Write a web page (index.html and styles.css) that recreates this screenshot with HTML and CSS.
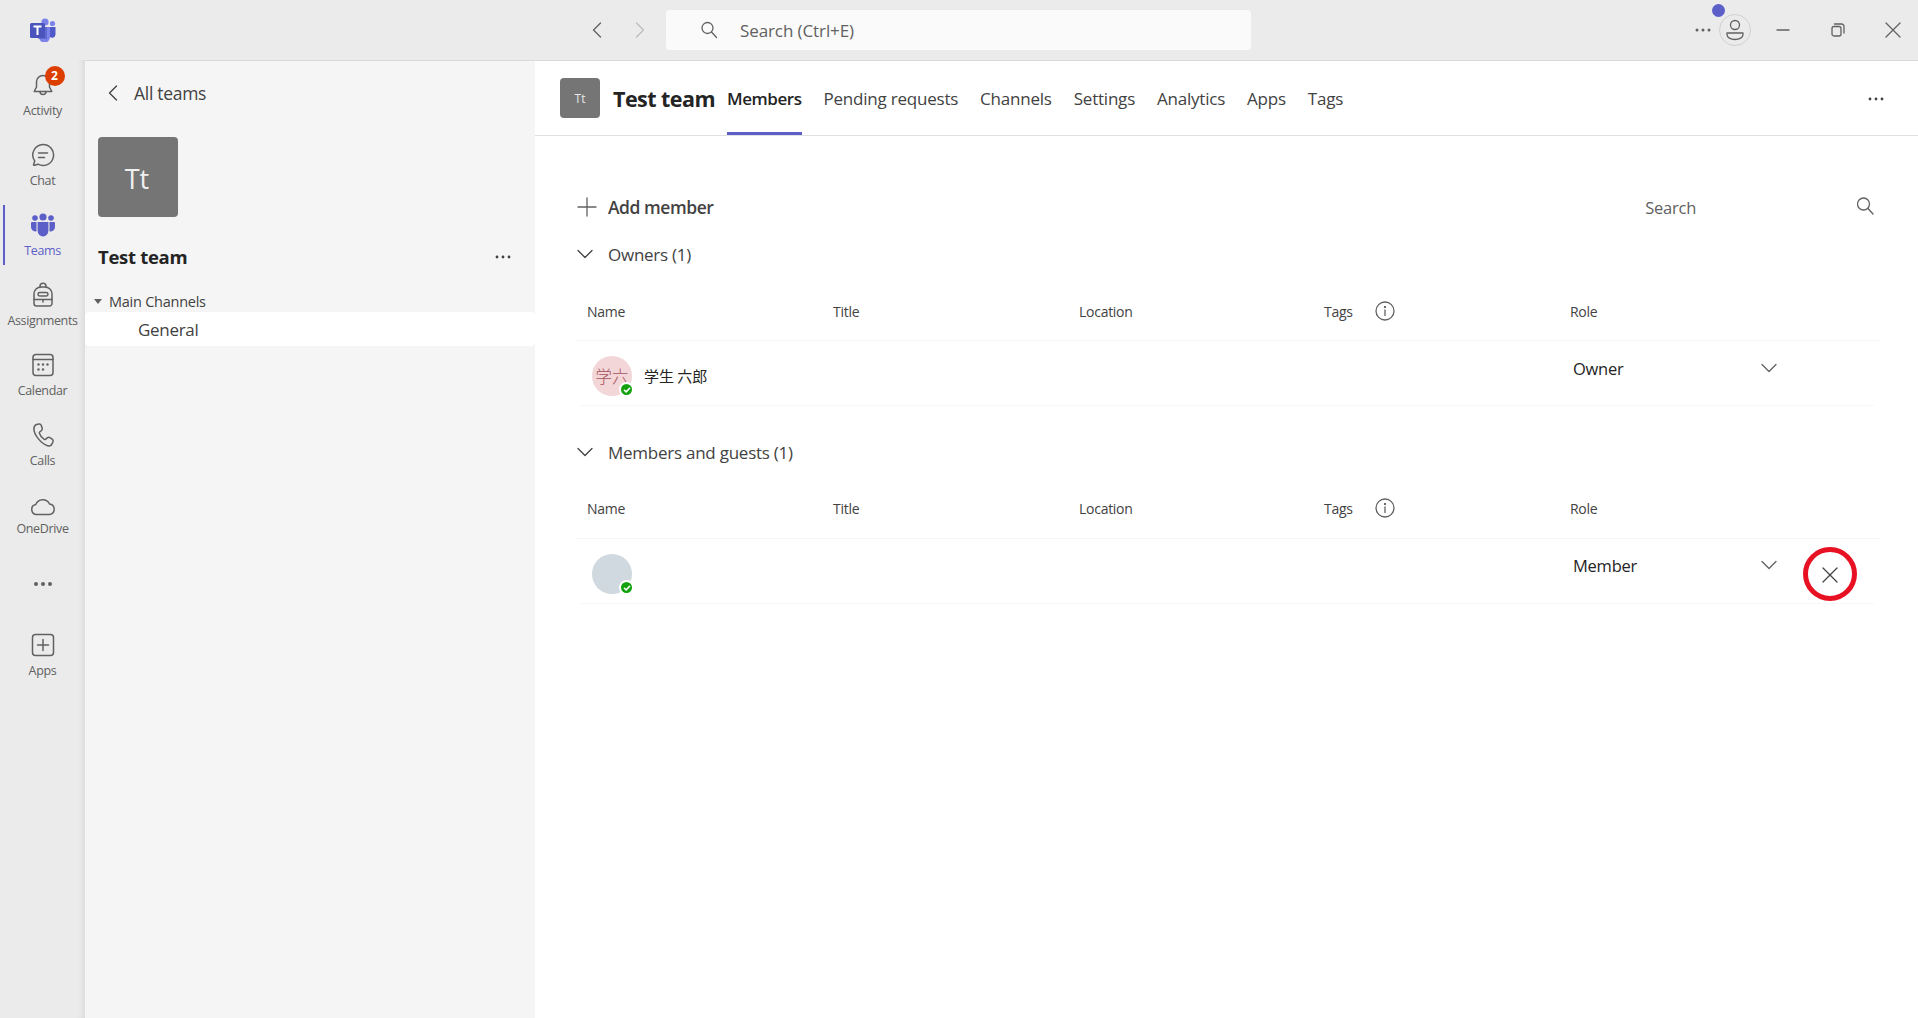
FILE: index.html
```html
<!DOCTYPE html>
<html lang="en">
<head>
<meta charset="utf-8">
<title>Test team - Members</title>
<link rel="stylesheet" href="styles.css">
</head>
<body>
<header class="topbar">
  <div class="logo-cell">
    <svg class="logo" viewBox="0 0 26 24" width="26" height="24">
      <circle cx="22.5" cy="5.5" r="2.6" fill="#7b83eb"/>
      <circle cx="15" cy="4" r="3.6" fill="#7b83eb"/>
      <path d="M19 9h6.5v7.5a3.5 3.5 0 0 1-6.500 1.500z" fill="#5059c9"/>
      <path d="M9 9h11v10a5.500 5.500 0 0 1-11 0z" fill="#7b83eb"/>
      <path d="M8 9h9v12H8z" fill="#4b53bc" opacity=".55"/>
      <rect x="0" y="5" width="15" height="15" rx="1.500" fill="#4b53bc"/>
      <path d="M3.500 8.500h8M7.500 8.500v8.500" stroke="#fff" stroke-width="2" fill="none"/>
    </svg>
  </div>
  <div class="history">
    <svg class="ico" viewBox="0 0 20 20" width="20" height="20"><path d="M12.500 3 5.500 10l7 7" class="ln"/></svg>
    <svg class="ico fwd" viewBox="0 0 20 20" width="20" height="20"><path d="M7.500 3l7 7-7 7" class="ln faint"/></svg>
  </div>
  <div class="searchbox">
    <svg class="ico" viewBox="0 0 20 20" width="20" height="20"><circle cx="8.500" cy="8" r="5.500" class="ln"/><path d="M12.500 12l5 5.500" class="ln"/></svg>
    <span class="search-text">Search (Ctrl+E)</span>
  </div>
  <div class="window-tools">
    <svg class="dots-ico" viewBox="0 0 16 4" width="16" height="4"><circle cx="2" cy="2" r="1.500"/><circle cx="8" cy="2" r="1.500"/><circle cx="14" cy="2" r="1.500"/></svg>
    <div class="profile">
      <svg viewBox="0 0 24 24" width="24" height="24"><circle cx="12" cy="7" r="4.500" class="ln"/><path d="M4 15h16v1.500c0 3-3.500 5-8 5s-8-2-8-5z" class="ln"/></svg>
      <span class="profile-dot"></span>
    </div>
    <svg class="win-min" viewBox="0 0 14 14" width="14" height="14"><path d="M1 7h12" class="ln"/></svg>
    <svg class="win-max" viewBox="0 0 14 14" width="14" height="14"><rect x="1" y="3.500" width="9" height="9.500" rx="2" class="ln"/><path d="M3.500 1h7a2.500 2.500 0 0 1 2.500 2.500V10" class="ln"/></svg>
    <svg class="win-close" viewBox="0 0 16 16" width="16" height="16"><path d="M1 1l14 14M15 1 1 15" class="ln"/></svg>
  </div>
</header>

<div class="app">
  <nav class="rail">
    <a class="rail-item">
      <span class="rail-icon">
        <svg viewBox="0 0 24 24" width="24" height="24"><path d="M12 2.500c-4 0-6.500 3-6.500 6.500v5L3.200 18.500h17.600L18.500 14V9c0-3.500-2.500-6.500-6.500-6.500z" class="ln"/><path d="M9 18.500c0 4 6 4 6 0" class="ln"/></svg>
        <span class="badge">2</span>
      </span>
      <span class="rail-label">Activity</span>
    </a>
    <a class="rail-item">
      <span class="rail-icon"><svg viewBox="0 0 24 24" width="24" height="24"><path d="M12 1.500a10.500 10.500 0 1 1-5 19.700l-3.500 1.100c-.6.200-1.100-.3-.9-.9L3.700 18A10.500 10.500 0 0 1 12 1.500z" class="ln"/><path d="M7.500 10h9M7.500 14.500h6" class="ln"/></svg></span>
      <span class="rail-label">Chat</span>
    </a>
    <a class="rail-item active">
      <span class="rail-icon"><svg viewBox="0 0 24 24" width="26" height="24"><circle cx="12" cy="4" r="3.600"/><circle cx="4" cy="5" r="2.800"/><circle cx="20" cy="5" r="2.800"/><path d="M6.600 9h10.800v9a5.400 5.400 0 0 1-10.800 0z"/><path d="M5.500 9H1.200C.5 9 0 9.500 0 10.200v3.800a4.500 4.500 0 0 0 5.500 4.300zM18.500 9h4.300c.7 0 1.200.5 1.200 1.200v3.800a4.500 4.500 0 0 1-5.500 4.300z"/></svg></span>
      <span class="rail-label">Teams</span>
    </a>
    <a class="rail-item">
      <span class="rail-icon"><svg viewBox="0 0 24 24" width="24" height="26"><path d="M9 4.500V3.200A3 3 0 0 1 15 3.200v1.300" class="ln"/><path d="M3 11a7 7 0 0 1 7-7h4a7 7 0 0 1 7 7v9.500a2.500 2.500 0 0 1-2.500 2.500h-13A2.500 2.500 0 0 1 3 20.500z" class="ln"/><rect x="7" y="9.500" width="10" height="3.500" rx="1.700" class="ln"/><path d="M3 16.500h18M12 16.500v2.500" class="ln"/></svg></span>
      <span class="rail-label">Assignments</span>
    </a>
    <a class="rail-item">
      <span class="rail-icon"><svg viewBox="0 0 24 24" width="24" height="24"><rect x="2" y="1.500" width="20" height="21" rx="3" class="ln"/><path d="M2 6.500h20" class="ln"/><g class="fill-dots"><circle cx="7.500" cy="11.500" r="1.200"/><circle cx="12" cy="11.500" r="1.200"/><circle cx="16.500" cy="11.500" r="1.200"/><circle cx="7.500" cy="16.500" r="1.200"/><circle cx="12" cy="16.500" r="1.200"/></g></svg></span>
      <span class="rail-label">Calendar</span>
    </a>
    <a class="rail-item">
      <span class="rail-icon"><svg viewBox="0 0 24 24" width="24" height="26"><path d="M5.500 1.500 8 1c1-.2 1.800.3 2.200 1.200l1 3c.3.900 0 1.700-.7 2.300L8.700 9c-.4.400-.5.800-.3 1.300.9 2.600 2.500 4.800 4.800 6.100.4.200.8.200 1.200-.1l1.900-1.500c.8-.6 1.700-.7 2.500-.2l2.400 1.600c.9.600 1.200 1.500.8 2.500l-1 2.200c-.6 1.500-2 2.500-3.700 2.100C9.500 20.500 3 11.500 2.900 6c0-2.200 1-3.900 2.600-4.500z" class="ln"/></svg></span>
      <span class="rail-label">Calls</span>
    </a>
    <a class="rail-item onedrive">
      <span class="rail-icon"><svg viewBox="0 0 26 18" width="26" height="18"><path d="M6.500 16.500a5 5 0 0 1-.7-9.900A7.500 7.500 0 0 1 19.500 6a5.300 5.300 0 0 1 .2 10.500z" class="ln"/></svg></span>
      <span class="rail-label">OneDrive</span>
    </a>
    <a class="rail-item more">
      <svg class="dots-ico" viewBox="0 0 20 6" width="20" height="6"><circle cx="3" cy="3" r="2"/><circle cx="10" cy="3" r="2"/><circle cx="17" cy="3" r="2"/></svg>
    </a>
    <a class="rail-item">
      <span class="rail-icon"><svg viewBox="0 0 24 24" width="24" height="24"><rect x="1.500" y="1.500" width="21" height="21" rx="3" class="ln"/><path d="M12 6.500v11M6.500 12h11" class="ln"/></svg></span>
      <span class="rail-label">Apps</span>
    </a>
  </nav>

  <aside class="panel">
    <div class="back-row">
      <svg viewBox="0 0 12 18" width="12" height="18"><path d="M9.500 2 2.500 9l7 7" class="ln dark"/></svg>
      <span class="back-text">All teams</span>
    </div>
    <div class="tile-large">Tt</div>
    <div class="panel-title-row">
      <span class="panel-title">Test team</span>
      <svg class="dots-ico darkdots" viewBox="0 0 16 4" width="16" height="4"><circle cx="2" cy="2" r="1.400"/><circle cx="8" cy="2" r="1.400"/><circle cx="14" cy="2" r="1.400"/></svg>
    </div>
    <div class="channel-group"><span class="caret"></span><span>Main Channels</span></div>
    <div class="channel">General</div>
  </aside>

  <main class="main">
    <div class="tabs-bar">
      <div class="tile-small">Tt</div>
      <h1 class="team-name">Test team</h1>
      <div class="tabs">
        <a class="tab current">Members</a>
        <a class="tab">Pending requests</a>
        <a class="tab">Channels</a>
        <a class="tab">Settings</a>
        <a class="tab">Analytics</a>
        <a class="tab">Apps</a>
        <a class="tab">Tags</a>
      </div>
      <svg class="dots-ico darkdots tabs-more" viewBox="0 0 16 4" width="16" height="4"><circle cx="2" cy="2" r="1.400"/><circle cx="8" cy="2" r="1.400"/><circle cx="14" cy="2" r="1.400"/></svg>
    </div>

    <div class="content">
      <div class="toolbar">
        <div class="add-member">
          <svg viewBox="0 0 20 20" width="20" height="20"><path d="M10 1v18M1 10h18" class="ln"/></svg>
          <span>Add member</span>
        </div>
        <div class="member-search">
          <span>Search</span>
          <svg viewBox="0 0 20 20" width="20" height="20"><circle cx="8.500" cy="8" r="6" class="ln"/><path d="M13 12.500l5 5.500" class="ln"/></svg>
        </div>
      </div>

      <section class="group">
        <div class="group-head">
          <svg viewBox="0 0 16 10" width="16" height="10"><path d="M1 1.500l7 7 7-7" class="ln dark"/></svg>
          <span>Owners (1)</span>
        </div>
        <div class="cols">
          <span>Name</span><span>Title</span><span>Location</span>
          <span class="tags-col">Tags <svg viewBox="0 0 20 20" width="20" height="20"><circle cx="10" cy="10" r="9" class="ln"/><path d="M10 9v5.500" class="ln"/><circle cx="10" cy="6" r="1.100" class="solid"/></svg></span>
          <span>Role</span>
        </div>
        <div class="member-row">
          <div class="person">
            <div class="avatar pink">学六<span class="presence"><svg viewBox="0 0 10 10" width="8" height="8"><path d="M1.800 5.300 4 7.300 8.200 2.800" class="tick"/></svg></span></div>
            <span class="person-name">学生 六郎</span>
          </div>
          <div class="role"><span>Owner</span><svg viewBox="0 0 16 10" width="16" height="10"><path d="M1 1.500l7 7 7-7" class="ln"/></svg></div>
        </div>
      </section>

      <section class="group second">
        <div class="group-head">
          <svg viewBox="0 0 16 10" width="16" height="10"><path d="M1 1.500l7 7 7-7" class="ln dark"/></svg>
          <span>Members and guests (1)</span>
        </div>
        <div class="cols">
          <span>Name</span><span>Title</span><span>Location</span>
          <span class="tags-col">Tags <svg viewBox="0 0 20 20" width="20" height="20"><circle cx="10" cy="10" r="9" class="ln"/><path d="M10 9v5.500" class="ln"/><circle cx="10" cy="6" r="1.100" class="solid"/></svg></span>
          <span>Role</span>
        </div>
        <div class="member-row">
          <div class="person">
            <div class="avatar grey"><span class="presence"><svg viewBox="0 0 10 10" width="8" height="8"><path d="M1.800 5.300 4 7.300 8.200 2.800" class="tick"/></svg></span></div>
          </div>
          <div class="role"><span>Member</span><svg viewBox="0 0 16 10" width="16" height="10"><path d="M1 1.500l7 7 7-7" class="ln"/></svg></div>
          <div class="remove">
            <svg viewBox="0 0 18 18" width="18" height="18"><path d="M2 2l14 14M16 2 2 16" class="ln dark"/></svg>
            <span class="annotation"></span>
          </div>
        </div>
      </section>
    </div>
  </main>
</div>
</body>
</html>
```

FILE: styles.css
```css
* { box-sizing: border-box; }
html, body { margin: 0; height: 100%; }
body {
  font-family: "Open Sans", "Noto Sans CJK JP", sans-serif;
  color: #242424;
  background: #fff;
  overflow: hidden;
  display: flex;
  flex-direction: column;
}
svg { display: block; flex: none; }
.ln { fill: none; stroke: #616161; stroke-width: 1.300; stroke-linecap: round; stroke-linejoin: round; }
.ln.dark { stroke: #424242; }
.ln.faint { stroke: #bdbdbd; }
.solid { fill: #424242; }
.dots-ico { fill: #616161; }
.darkdots { fill: #424242; }

/* top bar */
.topbar {
  height: 61px;
  flex: none;
  background: #ebebeb;
  border-bottom: 1px solid #d9d9d9;
  display: flex;
  align-items: center;
}
.logo-cell { width: 85px; flex: none; padding-left: 30px; }
.history { display: flex; gap: 21px; margin-left: 503px; width: 78px; }
.searchbox {
  width: 585px;
  height: 40px;
  background: #fafafa;
  border-radius: 4px;
  display: flex;
  align-items: center;
  padding-left: 33px;
  gap: 21px;
}
.search-text { font-size: 17px; color: #616161; letter-spacing: -.1px; margin-top: 1px; }
.window-tools { flex: 1; display: flex; align-items: center; }
.window-tools > .dots-ico { margin-left: 444px; }
.profile {
  width: 32px; height: 32px;
  border: 1px solid #d1d1d1;
  border-radius: 50%;
  margin-left: 8px;
  position: relative;
  display: flex; align-items: center; justify-content: center;
}
.profile-dot {
  position: absolute; left: -8px; top: -11px;
  width: 13px; height: 13px; border-radius: 50%; background: #5b5fc7;
}
.win-min { margin-left: 25px; }
.win-max { margin-left: 41px; }
.win-close { margin-left: 40px; }

/* rail */
.app { flex: 1; display: flex; min-height: 0; }
.rail {
  width: 85px; flex: none;
  background: #ebebeb;
  display: flex; flex-direction: column;
  margin-top: -1px;
  position: relative;
  box-shadow: inset -8px 0 8px -8px rgba(0,0,0,.12);
}
.rail-item {
  height: 70px;
  display: flex; flex-direction: column; align-items: center;
  padding-top: 12px;
  position: relative;
  color: #616161;
}
.rail-item .ln { stroke-width: 1.500; }
.rail-icon { height: 26px; display: flex; align-items: center; justify-content: center; position: relative; }
.rail-label { font-size: 12.500px; letter-spacing: -.35px; margin-top: 4px; line-height: 18px; }
.rail-item.active { color: #5b5fc7; }
.rail-item.active .rail-icon { fill: #5b5fc7; }
.rail-item.active::before {
  content: ""; position: absolute; left: 3px; top: 5px; width: 2px; height: 60px; background: #5b5fc7;
}
.rail-item.onedrive { padding-top: 14px; }
.rail-item.onedrive .rail-label { margin-top: 0; }
.rail-item.more { justify-content: center; padding-top: 0; height: 68px; }
.rail-item.more + .rail-item { margin-top: 2px; }
.fill-dots { fill: #616161; }
.badge {
  position: absolute; left: 14px; top: -6px;
  width: 20px; height: 20px; border-radius: 50%;
  background: #dc3e00; color: #fff;
  font-size: 12px; font-weight: 700; line-height: 20px; text-align: center;
}

/* channel panel */
.panel { width: 450px; flex: none; background: #f5f5f5; display: flex; flex-direction: column; }
.back-row { display: flex; align-items: center; gap: 15px; padding: 18px 0 0 22px; height: 46px; }
.back-text { font-size: 17.500px; font-weight: 500; color: #424242; letter-spacing: -.3px; }
.tile-large {
  width: 80px; height: 80px; margin: 30px 0 0 13px; padding: 2px 2px 0 0;
  background: #757575; border-radius: 4px; color: #f0f0f0;
  font-size: 27px; display: flex; align-items: center; justify-content: center;
}
.panel-title-row { display: flex; align-items: center; justify-content: space-between; padding: 0 24px 0 13px; height: 40px; margin-top: 19px; }
.panel-title-row .dots-ico { margin-top: 2px; }
.panel-title { font-size: 18.500px; font-weight: 700; letter-spacing: -.3px; }
.channel-group { display: flex; align-items: center; gap: 6px; padding-left: 9px; height: 21px; padding-bottom: 1px; margin-top: 15px; font-size: 14.500px; color: #424242; letter-spacing: -.25px; }
.channel-group .caret + span { margin-left: 1px; }
.caret { width: 0; height: 0; border-left: 4px solid transparent; border-right: 4px solid transparent; border-top: 5px solid #616161; }
.channel {
  height: 34px; background: #fff; border-radius: 4px; margin-top: 0;
  padding-left: 53px; font-size: 17px; line-height: 36px; color: #424242; letter-spacing: -.3px;
}

/* main */
.main { flex: 1; min-width: 0; display: flex; flex-direction: column; }
.tabs-bar {
  height: 75px; flex: none; border-bottom: 1px solid #e0e0e0;
  display: flex; align-items: stretch; padding-left: 25px;
}
.tile-small {
  width: 40px; height: 40px; margin-top: 17px; background: #757575; border-radius: 4px;
  color: #e8e8e8; font-size: 12px; display: flex; align-items: center; justify-content: center; flex: none;
}
.team-name { margin: 0 0 0 13px; width: 114px; font-size: 21.500px; font-weight: 700; line-height: 76px; letter-spacing: -.55px; white-space: nowrap; }
.tabs { display: flex; gap: 22px; }
.tab { font-size: 17px; line-height: 76px; color: #424242; letter-spacing: -.22px; white-space: nowrap; height: 74px; }
.tab.current { font-weight: 600; color: #242424; border-bottom: 3px solid #5b5fc7; letter-spacing: -.45px; }
.tabs-more { margin: 36px 34px 0 auto; }

.content { padding: 53px 38px 0 42px; display: flex; flex-direction: column; }
.toolbar { height: 36px; display: flex; align-items: center; justify-content: space-between; }
.add-member { display: flex; align-items: center; gap: 11px; font-size: 17.500px; font-weight: 600; color: #424242; letter-spacing: -.45px; }
.member-search { display: flex; align-items: center; gap: 159px; font-size: 16.500px; color: #616161; padding-right: 5px; letter-spacing: -.25px; }
.member-search svg { margin-top: -2px; }

.group { margin: 11px 0 0 -2px; }
.group.second { margin-top: 28px; }
.group-head { height: 36px; display: flex; align-items: center; gap: 15px; margin-bottom: 11px; padding-left: 2px; font-size: 17px; color: #424242; letter-spacing: -.25px; }
.cols {
  height: 58px; padding-bottom: 1px; border-bottom: 1px solid #f6f6f6;
  display: grid; grid-template-columns: 246px 246px 245px 246px 246px; align-items: center;
  font-size: 14px; color: #424242; letter-spacing: -.27px; padding-left: 12px;
}
.second .cols { padding-bottom: 3px; }
.tags-col { display: flex; align-items: center; gap: 22px; }
.member-row {
  height: 65px; margin: 0 6px 0 5px; border-bottom: 1px solid #f7f7f7;
  display: flex; position: relative;
}
.person { width: 993px; flex: none; display: flex; align-items: center; gap: 12px; padding: 6px 0 0 12px; }
.avatar {
  width: 40px; height: 40px; border-radius: 50%; position: relative; flex: none;
  display: flex; align-items: center; justify-content: center;
  font-size: 16.500px; color: #a4525c; font-family: "Noto Sans CJK JP", sans-serif; font-weight: 300;
}
.avatar.pink { background: #f3d6d8; }
.avatar.grey { background: #cfd9df; }
.presence {
  position: absolute; right: -2px; bottom: -1px;
  width: 15px; height: 15px; border-radius: 50%; background: #13a10e; border: 2px solid #fff;
  display: flex; align-items: center; justify-content: center;
}
.tick { fill: none; stroke: #fff; stroke-width: 2; stroke-linecap: round; stroke-linejoin: round; }
.person-name { font-family: "Noto Sans CJK JP", sans-serif; font-size: 15px; color: #242424; margin-top: -2px; }
.role {
  width: 206px; height: 54px; display: flex; align-items: center; justify-content: space-between;
  font-size: 16.500px; color: #242424; letter-spacing: -.25px; padding-right: 2px;
}
.second .role { height: 52px; }
.remove { margin-left: 42px; margin-top: 27px; width: 18px; height: 18px; position: relative; }
.annotation {
  position: absolute; left: -18px; top: -19px; width: 54px; height: 54px;
  border: 5px solid #e81123; border-radius: 50%;
}
```
